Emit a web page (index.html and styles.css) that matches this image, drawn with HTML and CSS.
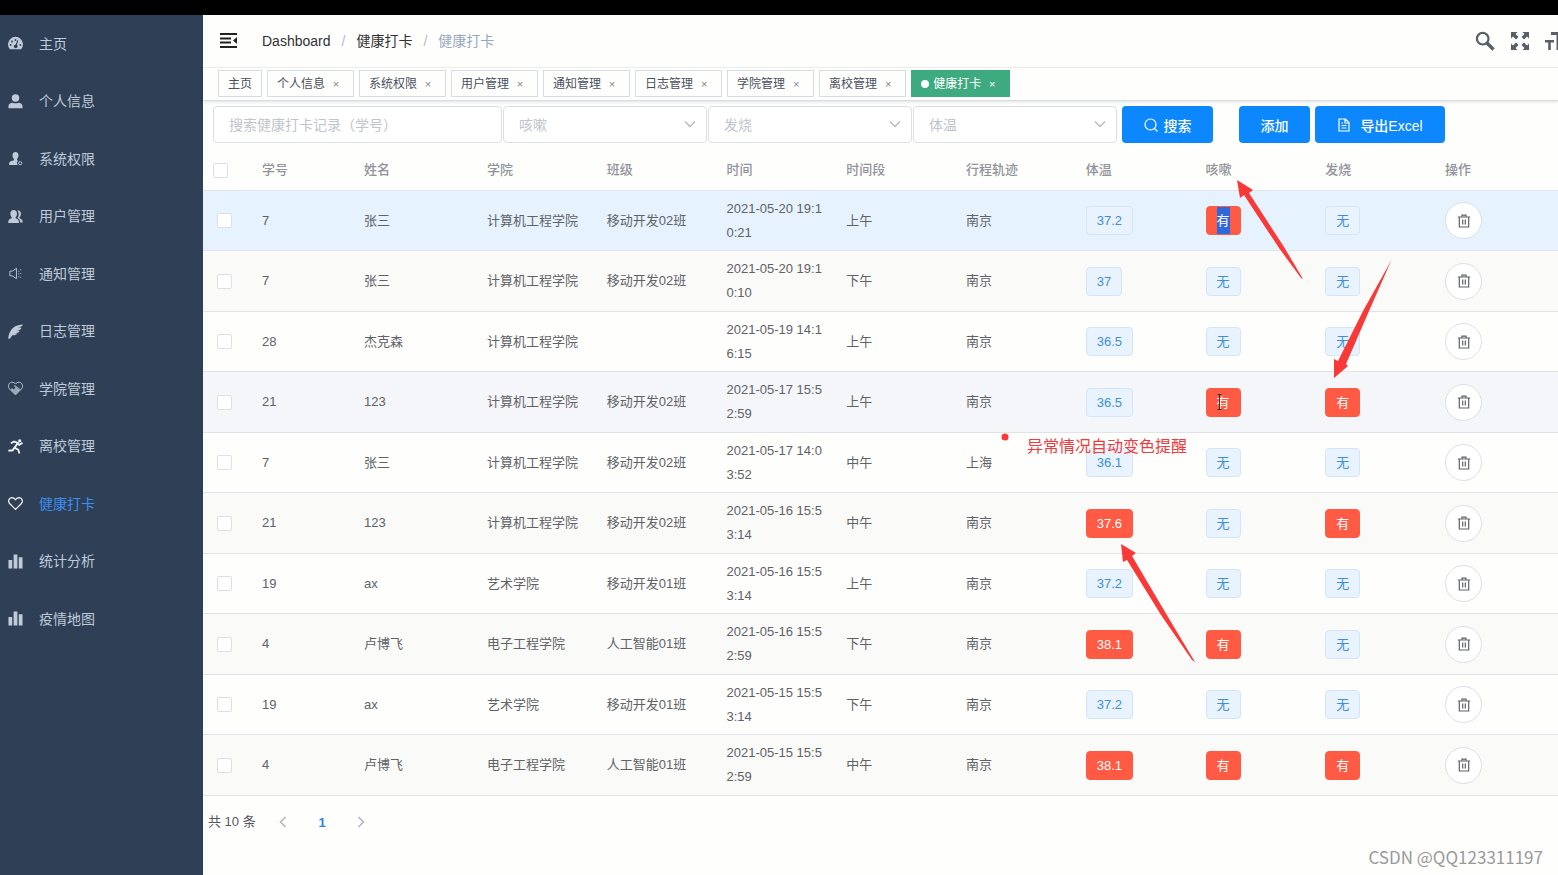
FILE: index.html
```html
<!DOCTYPE html>
<html lang="zh-CN">
<head>
<meta charset="utf-8">
<title>健康打卡</title>
<link rel="stylesheet" href="styles.css">
</head>
<body>
<svg class="sprite" aria-hidden="true">
  <symbol id="i-dash" viewBox="0 0 16 16"><path fill-rule="evenodd" d="M2 14.200A8 8 0 1 1 14 14.200H2zM8 3.300a1 1 0 1 0 0 2 1 1 0 0 0 0-2zM4.300 4.800a1 1 0 1 0 0 2 1 1 0 0 0 0-2zM2.800 8.500a1 1 0 1 0 0 2 1 1 0 0 0 0-2zM13.200 8.500a1 1 0 1 0 0 2 1 1 0 0 0 0-2zM11 4.800 9.900 4.500 8.200 9a2 2 0 1 0 1.300.400z"/></symbol>
  <symbol id="i-user" viewBox="0 0 16 16"><circle cx="8" cy="4.300" r="4"/><path d="M.500 15.200V13c0-2.300 2-3.800 4.300-3.800 1.900 1 4.500 1 6.400 0 2.300 0 4.300 1.500 4.300 3.800v2.200z"/></symbol>
  <symbol id="i-perm" viewBox="0 0 16 16"><path d="M8 1c2.200 0 3.200 1.700 3.200 3.800 0 1.600-.700 2.900-1.500 3.700v1.300l1.200.700a3 3 0 0 0-.5 4.300H1.200c0-3.500.8-3.800 5.100-5V8.500C5.500 7.700 4.800 6.400 4.800 4.800 4.800 2.700 5.800 1 8 1z"/><circle cx="13" cy="13" r="1.700" fill="none" stroke="currentColor"/></symbol>
  <symbol id="i-users" viewBox="0 0 16 16"><path d="M6 1c2.300 0 3.600 1.600 3.600 4 0 1.600-.700 3-1.500 3.800v1c2.700.800 3.700 1.900 3.700 5.200H.300c0-3.300.700-4.400 3.700-5.200v-1C3.100 8 2.500 6.600 2.500 5 2.500 2.600 3.700 1 6 1z"/><path d="M10 1.200c2.500 0 3.800 1.500 3.800 3.800 0 1.700-.700 3-1.500 3.800v1c2.600.800 3.400 2.300 3.400 4.700h-2.600c-.300-2.600-1.300-4-3-4.800 1.600-2.300 2-5.600-.100-8.500z"/></symbol>
  <symbol id="i-speaker" viewBox="0 0 16 16"><path d="M2 5.500h2.500L9 2.500v11l-4.500-3H2zM11.500 5v1m0 2v1m0 2v1M13.500 3.500v1m0 3v1m0 3v1" fill="none" stroke="currentColor"/></symbol>
  <symbol id="i-feather" viewBox="0 0 16 16"><path d="M.300 15.800C.5 10 3.500 4.500 8.300 2.200 10.500 1.100 13.500 1 15.800.200c-.3 2-2 3.300-5.300 4l4-.2c-.8 1.900-2.700 2.900-5.800 3.300l4-.1c-1.200 1.900-3 2.700-5.800 2.900l3.300.1c-1.500 1.500-3.300 2-5.700 1.800L2 15.800z"/></symbol>
  <symbol id="i-care" viewBox="0 0 16 16"><path d="M8 14.800 1.500 8.300C-.5 5.800.700 1.500 4 1.300 6 1.200 7.200 2.200 8 3.200c.8-1 2-2 4-1.900 3.300.200 4.500 4.500 2.500 7z" fill="none" stroke="currentColor"/><path d="m6 4.500 2 .3L13.500 9 8 14.500 2.500 9l2-1.500 1 1.500L8 7.500z" opacity=".75"/></symbol>
  <symbol id="i-run" viewBox="0 0 16 16"><circle cx="12.500" cy="1.900" r="1.700"/><path d="M3 4.500 6.500 2.800l4 1.400-3.500 5 4 2.300 1.200 4M10 4.500l2 1.800L15.500 4M7 9l-2 3-4.500.5" fill="none" stroke="currentColor" stroke-width="2"/></symbol>
  <symbol id="i-heart" viewBox="0 0 16 16"><path d="M8 14.300 1.700 8C-.300 5.500.9 2 4 1.800c2 0 3.200 1 4 2.200.8-1.200 2-2.200 4-2.200 3.100.2 4.300 3.700 2.300 6.200z" fill="none" stroke="currentColor" stroke-width="1.300"/></symbol>
  <symbol id="i-bars" viewBox="0 0 16 16"><path d="M.500 6.500h4v9h-4zM6 .500h4v15H6zM11.500 3.500h4v12h-4z"/></symbol>
  <symbol id="i-trash" viewBox="0 0 14 14"><path d="M.8 3h12.400M2.300 3v10h9.400V3M5 3V1.200h4V3M5.700 5.500v5M8.300 5.500v5" fill="none" stroke="currentColor" stroke-width="1.200"/></symbol>
  <symbol id="i-down" viewBox="0 0 14 14"><path d="m2 4.500 5 5 5-5" fill="none" stroke="currentColor" stroke-width="1.300"/></symbol>
</svg>

<div class="letterbox"></div>
<div class="app">
  <nav class="sidebar" aria-label="主菜单">
    <ul class="menu">
      <li><a href="#"><svg class="icon"><use href="#i-dash"/></svg>主页</a></li>
      <li><a href="#"><svg class="icon"><use href="#i-user"/></svg>个人信息</a></li>
      <li><a href="#"><svg class="icon"><use href="#i-perm"/></svg>系统权限</a></li>
      <li><a href="#"><svg class="icon"><use href="#i-users"/></svg>用户管理</a></li>
      <li><a href="#"><svg class="icon"><use href="#i-speaker"/></svg>通知管理</a></li>
      <li><a href="#"><svg class="icon"><use href="#i-feather"/></svg>日志管理</a></li>
      <li><a href="#"><svg class="icon"><use href="#i-care"/></svg>学院管理</a></li>
      <li><a href="#"><svg class="icon bright"><use href="#i-run"/></svg>离校管理</a></li>
      <li><a href="#" class="active"><svg class="icon bright"><use href="#i-heart"/></svg>健康打卡</a></li>
      <li><a href="#"><svg class="icon"><use href="#i-bars"/></svg>统计分析</a></li>
      <li><a href="#"><svg class="icon"><use href="#i-bars"/></svg>疫情地图</a></li>
    </ul>
  </nav>

  <main class="main">
    <header class="navbar">
      <button class="plain" aria-label="收起菜单"><svg class="fold" viewBox="0 0 18 16"><path d="M0 1h17M0 5.500h11M0 9.500h11M0 14h17" fill="none" stroke="currentColor" stroke-width="1.800"/><path d="M17 4v7l-4-3.500z"/></svg></button>
      <ol class="crumbs">
        <li><a href="#">Dashboard</a></li>
        <li><a href="#">健康打卡</a></li>
        <li class="here">健康打卡</li>
      </ol>
      <div class="tools">
        <button class="plain" aria-label="搜索菜单"><svg class="tool" viewBox="0 0 20 20"><circle cx="7.700" cy="7.700" r="5.800" fill="none" stroke="currentColor" stroke-width="2.200"/><path d="m12 12 6.500 6.500" stroke="currentColor" stroke-width="3.400"/></svg></button>
        <button class="plain" aria-label="全屏"><svg class="tool" viewBox="0 0 20 20"><path d="M1 1h6.500L5.500 3l3 3L6 8.500l-3-3-2 2zM19 1v6.500l-2-2-3 3L11.500 6l3-3-2-2zM1 19v-6.500l2 2 3-3L8.500 14l-3 3 2 2zM19 19h-6.500l2-2-3-3 2.500-2.500 3 3 2-2z"/></svg></button>
        <button class="plain" aria-label="字体大小"><svg class="tool" viewBox="0 0 20 20"><path d="M6 1h14v3h-5.500v15h-3V4H6zM0 9h9v2.500H5.800V19H3.200v-7.500H0z"/></svg></button>
      </div>
    </header>

    <div class="tabs">
      <a class="tab" href="#">主页</a>
      <div class="tab"><a href="#">个人信息</a><button class="close" aria-label="关闭">×</button></div>
      <div class="tab"><a href="#">系统权限</a><button class="close" aria-label="关闭">×</button></div>
      <div class="tab"><a href="#">用户管理</a><button class="close" aria-label="关闭">×</button></div>
      <div class="tab"><a href="#">通知管理</a><button class="close" aria-label="关闭">×</button></div>
      <div class="tab"><a href="#">日志管理</a><button class="close" aria-label="关闭">×</button></div>
      <div class="tab"><a href="#">学院管理</a><button class="close" aria-label="关闭">×</button></div>
      <div class="tab"><a href="#">离校管理</a><button class="close" aria-label="关闭">×</button></div>
      <div class="tab current"><a href="#">健康打卡</a><button class="close" aria-label="关闭">×</button></div>
    </div>

    <form class="filters">
      <input class="field search" type="text" aria-label="学号" placeholder="搜索健康打卡记录（学号）">
      <div class="pick"><select class="field" aria-label="咳嗽"><option>咳嗽</option></select><svg class="chev"><use href="#i-down"/></svg></div>
      <div class="pick"><select class="field" aria-label="发烧"><option>发烧</option></select><svg class="chev"><use href="#i-down"/></svg></div>
      <div class="pick"><select class="field" aria-label="体温"><option>体温</option></select><svg class="chev"><use href="#i-down"/></svg></div>
      <button class="btn find" type="button"><svg class="bicon" viewBox="0 0 14 14"><circle cx="6.500" cy="6.500" r="5.500" fill="none" stroke="currentColor" stroke-width="1.200"/><path d="m10.500 10.500 3 3" stroke="currentColor" stroke-width="1.200"/></svg>搜索</button>
      <button class="btn add" type="button">添加</button>
      <button class="btn export" type="button"><svg class="bicon" viewBox="0 0 14 14"><path d="M2 1h6.500L12 4.500V13H2zM8 1v4h4M4.500 5H6M4.500 7.500h5M4.500 10h5" fill="none" stroke="currentColor" stroke-width="1.200"/></svg>导出Excel</button>
    </form>

    <table class="grid">
      <colgroup><col class="c-check"><col class="c-id"><col class="c-name"><col><col><col><col><col><col><col><col><col class="c-ops"></colgroup>
      <thead>
        <tr><th><input type="checkbox" aria-label="全选"></th><th>学号</th><th>姓名</th><th>学院</th><th>班级</th><th>时间</th><th>时间段</th><th>行程轨迹</th><th>体温</th><th>咳嗽</th><th>发烧</th><th>操作</th></tr>
      </thead>
      <tbody>
        <tr class="selected"><td><input type="checkbox" aria-label="选择"></td><td>7</td><td>张三</td><td>计算机工程学院</td><td>移动开发02班</td><td>2021-05-20 19:10:21</td><td>上午</td><td>南京</td><td><span class="tag">37.2</span></td><td><span class="tag bad"><mark>有</mark></span></td><td><span class="tag">无</span></td><td><button class="del" aria-label="删除"><svg><use href="#i-trash"/></svg></button></td></tr>
        <tr><td><input type="checkbox" aria-label="选择"></td><td>7</td><td>张三</td><td>计算机工程学院</td><td>移动开发02班</td><td>2021-05-20 19:10:10</td><td>下午</td><td>南京</td><td><span class="tag">37</span></td><td><span class="tag">无</span></td><td><span class="tag">无</span></td><td><button class="del" aria-label="删除"><svg><use href="#i-trash"/></svg></button></td></tr>
        <tr><td><input type="checkbox" aria-label="选择"></td><td>28</td><td>杰克森</td><td>计算机工程学院</td><td></td><td>2021-05-19 14:16:15</td><td>上午</td><td>南京</td><td><span class="tag">36.5</span></td><td><span class="tag">无</span></td><td><span class="tag">无</span></td><td><button class="del" aria-label="删除"><svg><use href="#i-trash"/></svg></button></td></tr>
        <tr class="hovered"><td><input type="checkbox" aria-label="选择"></td><td>21</td><td>123</td><td>计算机工程学院</td><td>移动开发02班</td><td>2021-05-17 15:52:59</td><td>上午</td><td>南京</td><td><span class="tag">36.5</span></td><td><span class="tag bad">有</span></td><td><span class="tag bad">有</span></td><td><button class="del" aria-label="删除"><svg><use href="#i-trash"/></svg></button></td></tr>
        <tr><td><input type="checkbox" aria-label="选择"></td><td>7</td><td>张三</td><td>计算机工程学院</td><td>移动开发02班</td><td>2021-05-17 14:03:52</td><td>中午</td><td>上海</td><td><span class="tag">36.1</span></td><td><span class="tag">无</span></td><td><span class="tag">无</span></td><td><button class="del" aria-label="删除"><svg><use href="#i-trash"/></svg></button></td></tr>
        <tr><td><input type="checkbox" aria-label="选择"></td><td>21</td><td>123</td><td>计算机工程学院</td><td>移动开发02班</td><td>2021-05-16 15:53:14</td><td>中午</td><td>南京</td><td><span class="tag bad">37.6</span></td><td><span class="tag">无</span></td><td><span class="tag bad">有</span></td><td><button class="del" aria-label="删除"><svg><use href="#i-trash"/></svg></button></td></tr>
        <tr><td><input type="checkbox" aria-label="选择"></td><td>19</td><td>ax</td><td>艺术学院</td><td>移动开发01班</td><td>2021-05-16 15:53:14</td><td>上午</td><td>南京</td><td><span class="tag">37.2</span></td><td><span class="tag">无</span></td><td><span class="tag">无</span></td><td><button class="del" aria-label="删除"><svg><use href="#i-trash"/></svg></button></td></tr>
        <tr><td><input type="checkbox" aria-label="选择"></td><td>4</td><td>卢博飞</td><td>电子工程学院</td><td>人工智能01班</td><td>2021-05-16 15:52:59</td><td>下午</td><td>南京</td><td><span class="tag bad">38.1</span></td><td><span class="tag bad">有</span></td><td><span class="tag">无</span></td><td><button class="del" aria-label="删除"><svg><use href="#i-trash"/></svg></button></td></tr>
        <tr><td><input type="checkbox" aria-label="选择"></td><td>19</td><td>ax</td><td>艺术学院</td><td>移动开发01班</td><td>2021-05-15 15:53:14</td><td>下午</td><td>南京</td><td><span class="tag">37.2</span></td><td><span class="tag">无</span></td><td><span class="tag">无</span></td><td><button class="del" aria-label="删除"><svg><use href="#i-trash"/></svg></button></td></tr>
        <tr><td><input type="checkbox" aria-label="选择"></td><td>4</td><td>卢博飞</td><td>电子工程学院</td><td>人工智能01班</td><td>2021-05-15 15:52:59</td><td>中午</td><td>南京</td><td><span class="tag bad">38.1</span></td><td><span class="tag bad">有</span></td><td><span class="tag bad">有</span></td><td><button class="del" aria-label="删除"><svg><use href="#i-trash"/></svg></button></td></tr>
      </tbody>
    </table>

    <div class="pager">
      <span>共 10 条</span>
      <button class="page" aria-label="上一页"><svg class="chev-side" viewBox="0 0 12 12"><path d="M8.500 1 3.500 6l5 5" fill="none" stroke="currentColor" stroke-width="1.500"/></svg></button>
      <button class="page on">1</button>
      <button class="page" aria-label="下一页"><svg class="chev-side" viewBox="0 0 12 12"><path d="m3.500 1 5 5-5 5" fill="none" stroke="currentColor" stroke-width="1.500"/></svg></button>
    </div>
  </main>
</div>

<svg class="arrows" viewBox="0 0 1558 875" aria-hidden="true">
  <path d="M1237 180 1253 190 1249 193 1284 247 1303 279 1301 278 1279 248 1244 195 1240 198z"/>
  <path d="M1391.500 260 1369 311 1346 364 1348 366 1334 378V359L1338 361 1363 311z"/>
  <path d="M1121 544 1136 553 1132 556 1168 617 1195 662 1192 660 1161 615 1127 560 1123 562z"/>
  <circle cx="1005" cy="437" r="3.500"/>
  <path class="caret" d="M1217.500 394.500h4M1219.500 394.500v15M1217.500 409.500h4"/>
</svg>
<p class="note">异常情况自动变色提醒</p>
<p class="credit">CSDN @QQ123311197</p>
</body>
</html>
```

FILE: styles.css
```css
* { box-sizing: border-box; }

body {
  margin: 0;
  position: relative;
  min-height: 100vh;
  display: flex;
  flex-direction: column;
  overflow: hidden;
  background: #fefefd;
  color: #606266;
  font: 13px/24px "Liberation Sans", "Noto Sans CJK SC", sans-serif;
}

a { color: inherit; text-decoration: none; }
button, input, select { font-family: inherit; }
svg { display: block; fill: currentColor; }
.sprite { position: absolute; width: 0; height: 0; }

.letterbox { height: 15px; background: #000; }
.app { flex: 1; display: flex; }

.sidebar { width: 203px; flex: none; background: #2f3f55; }
.menu { list-style: none; margin: 0; padding: 0; }
.menu a {
  display: flex;
  align-items: center;
  gap: 16px;
  height: 57px;
  padding-left: 8px;
  color: #bfcbd9;
  font-size: 14px;
}
.menu li:nth-child(even) a { height: 58px; }
.menu a.active { color: #3b8ff0; }
.icon { width: 15px; height: 15px; color: #bfcbd9; }
.icon.bright { color: #f0f4f8; }

.main { flex: 1; min-width: 0; }

.plain { border: 0; padding: 0; background: none; color: inherit; }
.navbar {
  display: flex;
  align-items: center;
  height: 53px;
  padding-left: 17px;
  border-bottom: 1px solid #f0f0f0;
  overflow: hidden;
}
.fold { width: 18px; height: 16px; color: #222; }
.crumbs {
  display: flex;
  list-style: none;
  margin: 0 0 0 24px;
  padding: 0;
  font-size: 14px;
  color: #303133;
}
.crumbs li + li::before { content: "/"; margin: 0 11px; color: #b4bccc; }
.crumbs .here { color: #97a8be; }
.tools {
  display: flex;
  flex: none;
  gap: 15px;
  margin: 0 -7px 0 auto;
  color: #5a5e66;
}
.tool { width: 20px; height: 20px; }

.tabs {
  display: flex;
  gap: 5px;
  height: 33px;
  padding: 2px 15px 3px;
  border-bottom: 1px solid #d8dce5;
  box-shadow: 0 1px 3px rgba(0, 0, 0, .12);
}
.tab {
  display: flex;
  align-items: center;
  gap: 4px;
  padding: 1px 9px 0;
  border: 1px solid #d8dce5;
  color: #495060;
  font-size: 12px;
}
div.tab { padding-right: 10px; }
.close {
  width: 14px;
  border: 0;
  padding: 0;
  background: none;
  color: #80858f;
  font-size: 11px;
}
.tab.current { background: #3eaa80; border-color: #3eaa80; color: #fff; }
.tab.current::before { content: ""; width: 8px; height: 8px; border-radius: 50%; background: #fff; }
.tab.current .close { color: #fff; }

.filters { display: flex; gap: 1px; padding: 5px 10px 7px; }
.field {
  width: 204px;
  height: 37px;
  padding: 0 15px;
  border: 1px solid #dcdfe6;
  border-radius: 4px;
  background: #fff;
  color: #c0c4cc;
  font-size: 14px;
  appearance: none;
}
.field::placeholder { color: #c0c4cc; }
.field.search { width: 289px; }
.pick { position: relative; }
.chev {
  position: absolute;
  top: 11px;
  right: 10px;
  width: 14px;
  height: 14px;
  color: #b4b8c0;
  pointer-events: none;
}
.btn {
  display: flex;
  align-items: center;
  justify-content: center;
  gap: 6px;
  height: 37px;
  border: 0;
  border-radius: 4px;
  background: #0c87fd;
  color: #fff;
  font-size: 14px;
  font-weight: 500;
}
.bicon { width: 14px; height: 14px; }
.find { width: 91px; margin-left: 4px; }
.add { width: 71px; margin-left: 25px; }
.export { width: 130px; margin-left: 4px; gap: 9px; }

.grid { width: 100%; table-layout: fixed; border-collapse: separate; border-spacing: 0; }
.c-check { width: 50px; }
.c-id { width: 102px; }
.c-name { width: 123px; }
.c-ops { width: 122px; }
.grid th {
  height: 41px;
  padding: 0 10px 0 9px;
  border-bottom: 1px solid #e2e6ec;
  color: #909399;
  font-weight: 500;
  text-align: left;
}
.grid th:first-child { padding-left: 10px; }
.grid td {
  height: 60px;
  padding: 0 9px;
  border-bottom: 1px solid #e0e3e9;
  word-break: break-all;
}
.grid td:nth-child(4), .grid td:nth-child(5) { padding-right: 0; }
.grid td:first-child { padding: 0 0 0 14px; }
.grid tbody tr:nth-child(even) td { height: 61px; background: #fafaf9; }
.grid .selected td { background: #e6f2fe; }
.grid tbody tr.hovered td { background: #f5f6fa; }
.grid input {
  display: block;
  width: 15px;
  height: 15px;
  margin: 0;
  border: 1px solid #dcdfe6;
  border-radius: 2px;
  background: #fff;
  appearance: none;
}
.tag {
  display: block;
  width: max-content;
  padding: 0 10px;
  border: 1px solid #d3e6f8;
  border-radius: 4px;
  background: #e8f3fd;
  color: #3f8fd8;
  line-height: 27px;
}
.tag.bad { border-color: #ff5a43; background: #ff5a43; color: #fff; }
.tag mark { display: block; background: #2e69dc; color: #fff; }
.del {
  display: grid;
  place-items: center;
  width: 37px;
  height: 37px;
  padding: 0;
  border: 1px solid #dcdfe6;
  border-radius: 50%;
  background: #fff;
  color: #606266;
}
.del svg { width: 14px; height: 14px; }

.pager { display: flex; align-items: center; padding: 12px 5px; color: #55585e; }
.pager span { margin-right: 8px; }
.page {
  display: grid;
  place-items: center;
  width: 39px;
  height: 28px;
  border: 0;
  padding: 0;
  background: none;
  color: #b0b4bb;
  font-size: 13px;
}
.page.on { color: #2f80e8; font-weight: 700; }
.chev-side { width: 12px; height: 12px; }

.arrows {
  position: absolute;
  top: 0;
  left: 0;
  width: 1558px;
  height: 875px;
  color: #f93838;
  pointer-events: none;
}
.caret { fill: none; stroke: #333; }
.note {
  position: absolute;
  top: 435px;
  left: 1027px;
  margin: 0;
  color: #ee3b40;
  font-size: 16px;
}
.credit {
  position: absolute;
  right: 15px;
  bottom: 6px;
  margin: 0;
  color: #999;
  font: 400 17px/24px "Noto Sans CJK SC", sans-serif;
}
```
